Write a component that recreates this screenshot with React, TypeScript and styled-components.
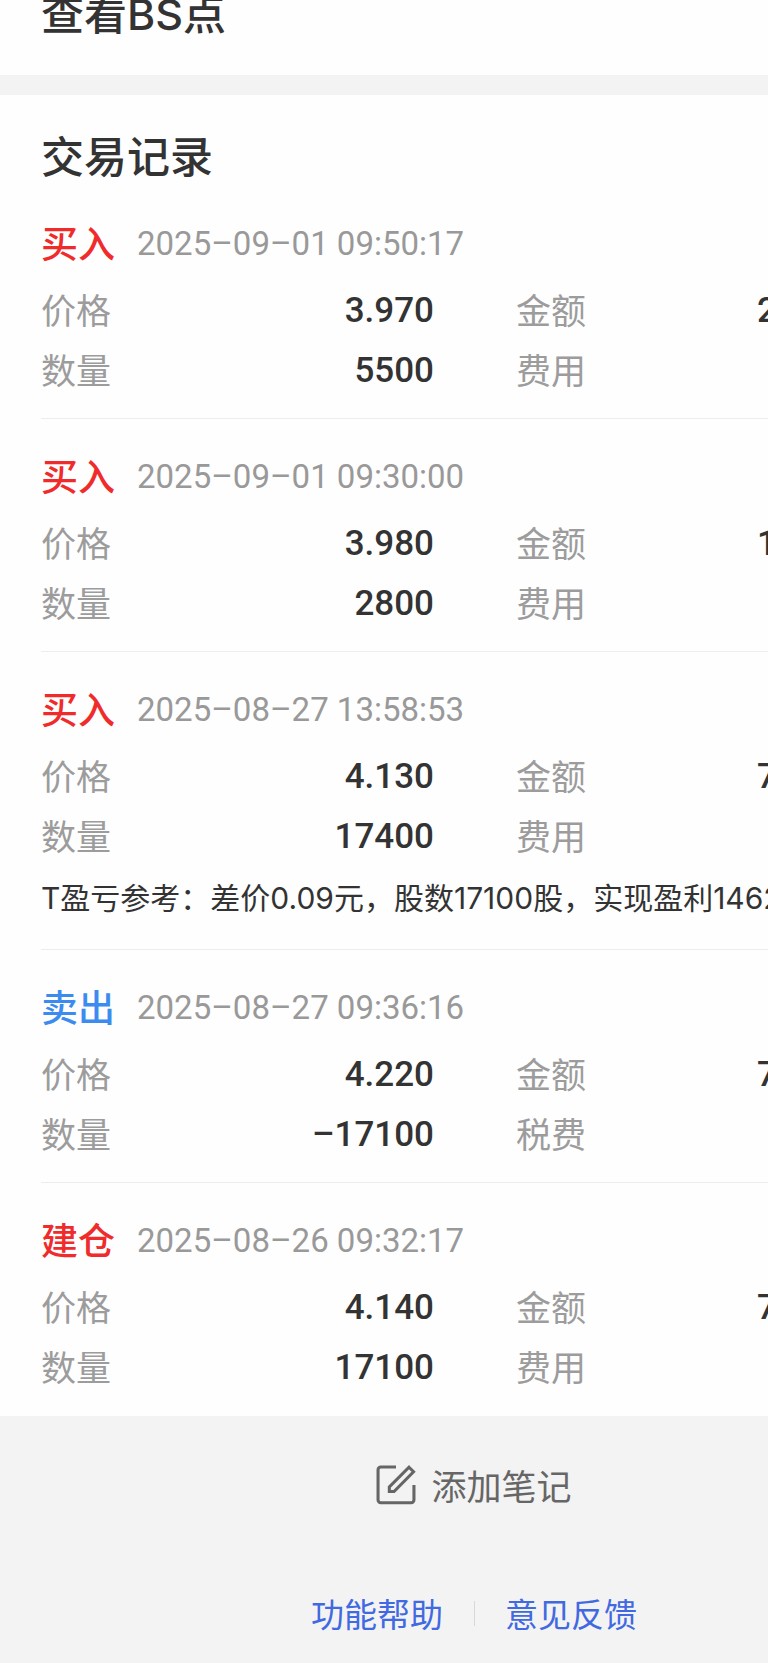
import React from "react";
import styled, { createGlobalStyle } from "styled-components";

const cjk = `"Noto Sans CJK SC", sans-serif`;

const GlobalStyle = createGlobalStyle`
  *, *::before, *::after { box-sizing: border-box; }
  body {
    margin: 0;
    background: #f3f3f3;
    color: #333;
    font-family: ${cjk};
  }
  h2, h3, dl, dd, p { margin: 0; font-weight: inherit; }
`;

const Viewport = styled.div`
  overflow: hidden;
`;

/* The sheet keeps its two-column width on narrow windows. */
const Sheet = styled.main`
  min-width: 948px;
`;

const Panel = styled.section`
  padding: 0 0 1px 41px;
  background: #fefefe;
`;

const TopPanel = styled(Panel)`
  padding-bottom: 46px;
  margin-bottom: 20px;
`;

const TopTitle = styled.h2`
  font-family: Inter, ${cjk};
  font-size: 43px;
  font-weight: 500;
  line-height: 29px;
`;

const PanelTitle = styled.h2`
  padding: 36px 0 9px;
  font-size: 43px;
  font-weight: 500;
  line-height: 46px;
`;

const Record = styled.article`
  padding: 34px 0 17px;

  & + & {
    border-top: 1px solid #ededed;
  }
`;

const RecordHead = styled.header`
  display: flex;
  align-items: flex-start;
  gap: 22px;
  height: 48px;
  margin-bottom: 13px;
`;

const Action = styled.h3<{ $sell?: boolean }>`
  font-size: 37px;
  font-weight: 500;
  line-height: 44px;
  color: ${(p) => (p.$sell ? "#3c8cf0" : "#f02b2b")};
`;

const Time = styled.time`
  font-family: Roboto, ${cjk};
  font-size: 33px;
  line-height: 48px;
  color: #999;
`;

const Fields = styled.dl`
  display: grid;
  grid-template-columns: 393px 1fr;
  column-gap: 82px;
  padding-right: 42px;
`;

const Field = styled.div`
  display: flex;
  justify-content: space-between;
  align-items: flex-start;
  height: 60px;
`;

const Label = styled.dt`
  font-size: 35px;
  line-height: 56px;
  color: #9c9c9c;
`;

const Value = styled.dd`
  font-family: Roboto, ${cjk};
  font-size: 35px;
  font-weight: 500;
  line-height: 60px;
`;

const Note = styled.p`
  padding-bottom: 3px;
  font-family: Inter, ${cjk};
  font-size: 30px;
  line-height: 62px;
  white-space: nowrap;
`;

const Footer = styled.footer`
  display: flex;
  flex-direction: column;
  align-items: center;
  gap: 68px;
  padding: 39px 0 19px;
  background: #f3f3f3;
`;

const AddNote = styled.button`
  display: flex;
  align-items: center;
  gap: 15px;
  padding: 0;
  border: 0;
  background: none;
  color: #666;
  font-family: inherit;
  font-size: 35px;
  line-height: 60px;
  cursor: pointer;
`;

const Links = styled.nav`
  display: flex;
  align-items: center;
`;

const FooterLink = styled.a`
  padding: 0 31px;
  font-size: 33px;
  line-height: 60px;
  color: #4169e1;
  text-decoration: none;

  & + & {
    background: linear-gradient(#d8d8d8, #d8d8d8) left center / 1px 25px no-repeat;
  }
`;

type Trade = {
  action: string;
  sell?: boolean;
  time: string;
  price: string;
  amount: string;
  quantity: string;
  feeLabel: string;
  note?: string;
};

const trades: Trade[] = [
  { action: "买入", time: "2025–09–01 09:50:17", price: "3.970", amount: "21835.00", quantity: "5500", feeLabel: "费用" },
  { action: "买入", time: "2025–09–01 09:30:00", price: "3.980", amount: "11144.00", quantity: "2800", feeLabel: "费用" },
  {
    action: "买入",
    time: "2025–08–27 13:58:53",
    price: "4.130",
    amount: "71862.00",
    quantity: "17400",
    feeLabel: "费用",
    note: "T盈亏参考：差价0.09元，股数17100股，实现盈利1462",
  },
  { action: "卖出", sell: true, time: "2025–08–27 09:36:16", price: "4.220", amount: "72162.00", quantity: "–17100", feeLabel: "税费" },
  { action: "建仓", time: "2025–08–26 09:32:17", price: "4.140", amount: "70794.00", quantity: "17100", feeLabel: "费用" },
];

function NoteIcon() {
  return (
    <svg width="40" height="40" viewBox="0 0 39 39" fill="none" stroke="currentColor" strokeWidth="3" aria-hidden="true">
      <path d="M19.5 2H4.6A2.6 2.6 0 0 0 2 4.6V34.2A2.6 2.6 0 0 0 4.6 36.8H34.4A2.6 2.6 0 0 0 37 34.2V19.6" />
      <path d="M32.2 2.2L36.6 6.6L17.6 25.8H13V21.4Z" />
    </svg>
  );
}

export default function App() {
  return (
    <Viewport>
      <GlobalStyle />
      <Sheet>
        <TopPanel>
          <TopTitle>查看BS点</TopTitle>
        </TopPanel>
        <Panel>
          <PanelTitle>交易记录</PanelTitle>
          {trades.map((t) => (
            <Record key={t.time}>
              <RecordHead>
                <Action $sell={t.sell}>{t.action}</Action>
                <Time>{t.time}</Time>
              </RecordHead>
              <Fields>
                <Field>
                  <Label>价格</Label>
                  <Value>{t.price}</Value>
                </Field>
                <Field>
                  <Label>金额</Label>
                  <Value>{t.amount}</Value>
                </Field>
                <Field>
                  <Label>数量</Label>
                  <Value>{t.quantity}</Value>
                </Field>
                <Field>
                  <Label>{t.feeLabel}</Label>
                  <Value />
                </Field>
              </Fields>
              {t.note && <Note>{t.note}</Note>}
            </Record>
          ))}
        </Panel>
        <Footer>
          <AddNote type="button">
            <NoteIcon />
            添加笔记
          </AddNote>
          <Links>
            <FooterLink href="#help">功能帮助</FooterLink>
            <FooterLink href="#feedback">意见反馈</FooterLink>
          </Links>
        </Footer>
      </Sheet>
    </Viewport>
  );
}
